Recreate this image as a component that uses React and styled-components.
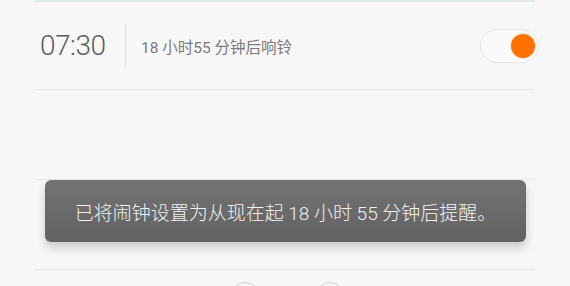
import React from "react";
import styled, { createGlobalStyle } from "styled-components";

const Global = createGlobalStyle`
  html, body { margin: 0; padding: 0; }
  body {
    background: #f7f7f7;
    font-family: Roboto, "Noto Sans CJK SC", sans-serif;
    width: 570px;
    height: 286px;
    overflow: hidden;
  }
`;

const Page = styled.div`
  position: relative;
  width: 570px;
  height: 286px;
  overflow: hidden;
  background: #f7f7f7;
`;

const List = styled.div`
  margin: 0 35px;
  border-top: 2px solid #dfe9e5;
`;

const Row = styled.div`
  height: ${(p) => p.$h || 88}px;
  border-bottom: 1px solid #e8e8e8;
  display: flex;
  align-items: center;
  box-sizing: border-box;
`;

const Time = styled.div`
  font-family: Roboto, sans-serif;
  font-weight: 300;
  font-size: 28px;
  color: #5e5e5e;
  padding-left: 5px;
  width: 85px;
  letter-spacing: -0.5px;
`;

const VDivider = styled.div`
  width: 1px;
  height: 42px;
  background: #dcdcdc;
  margin-right: 15px;
`;

const Sub = styled.div`
  flex: 1;
  font-family: Roboto, "Noto Sans CJK SC", sans-serif;
  font-size: 15.5px;
  color: #7a7a7a;
`;

const Switch = styled.div`
  width: 59px;
  height: 34px;
  box-sizing: border-box;
  border: 1.5px solid #e6e6e6;
  border-radius: 17px;
  background: #fafafa;
  display: flex;
  align-items: center;
  justify-content: flex-end;
  padding-right: 3px;
  margin-right: -4px;
`;

const Knob = styled.div`
  width: 24px;
  height: 24px;
  border-radius: 50%;
  background: #ff7200;
  box-shadow: 0 0 2px rgba(255, 140, 40, 0.5);
`;

const Toast = styled.div`
  position: absolute;
  left: 45px;
  top: 180px;
  width: 481px;
  height: 62px;
  border-radius: 6px;
  background: linear-gradient(#737373, #626262);
  box-shadow: 0 6px 10px rgba(0, 0, 0, 0.18);
  display: flex;
  align-items: center;
  justify-content: center;
  color: #f2f2f2;
  font-family: Roboto, "Noto Sans CJK SC", sans-serif;
  font-weight: 300;
  font-size: 19px;
`;

const Circles = styled.div`
  display: flex;
  justify-content: center;
  gap: 55px;
  padding-top: 12px;
  padding-left: 5px;
`;

const Circle = styled.div`
  width: 30px;
  height: 30px;
  border-radius: 50%;
  border: 1.5px solid #cfcfcf;
  box-sizing: border-box;
`;

export default function App() {
  return (
    <Page>
      <Global />
      <List>
        <Row>
          <Time>07:30</Time>
          <VDivider />
          <Sub>18 小时55 分钟后响铃</Sub>
          <Switch>
            <Knob />
          </Switch>
        </Row>
        <Row $h={90} />
        <Row $h={90} />
        <Circles>
          <Circle />
          <Circle />
        </Circles>
      </List>
      <Toast>已将闹钟设置为从现在起 18 小时 55 分钟后提醒。</Toast>
    </Page>
  );
}
